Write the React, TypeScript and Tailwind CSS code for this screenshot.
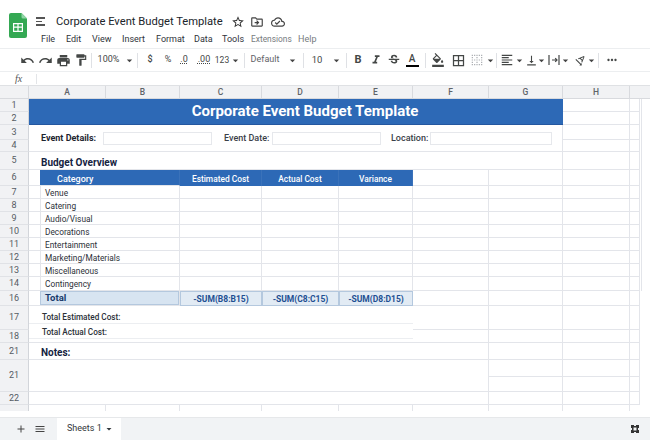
import {
  MdUndo,
  MdRedo,
  MdPrint,
  MdFormatPaint,
  MdFormatItalic,
  MdStrikethroughS,
  MdFormatColorFill,
  MdBorderAll,
  MdBorderClear,
  MdFormatAlignLeft,
  MdVerticalAlignBottom,
  MdTextRotationAngledown,
  MdMoreHoriz,
  MdStarBorder,
  MdOutlineDriveFileMove,
  MdOutlineCloudDone,
  MdAdd,
  MdMenu,
  MdArrowDropDown,
} from "react-icons/md";

const font = "font-['Roboto',sans-serif]";
const line = "border-r border-b border-[#e3e5ea]";
const rowHead =
  "flex items-center justify-center bg-[#f1f2f4] border-r border-b border-r-[#d2d5da] border-b-[#e0e2e6] pt-px text-[9px] text-[#555b63]";
const colHead =
  "flex items-center justify-center bg-[#f1f2f4] border-r border-b border-r-[#d8dade] border-b-[#d8dade] text-[8.500px] font-medium text-[#5f6368]";

const menu = [
  { label: "File", w: "w-[25px]" },
  { label: "Edit", w: "w-[26px]" },
  { label: "View", w: "w-[30px]" },
  { label: "Insert", w: "w-[34px]" },
  { label: "Format", w: "w-[38px]" },
  { label: "Data", w: "w-[28px]" },
  { label: "Tools", w: "w-[29px]" },
  { label: "Extensions", w: "w-[47px] text-[8.400px]", muted: true },
  { label: "Help", w: "w-[24px]", muted: true },
];

const items = ["Venue", "Catering", "Audio/Visual", "Decorations", "Entertainment", "Marketing/Materials", "Miscellaneous", "Contingency"];
const itemRows = [7, 8, 9, 10, 11, 12, 13, 14];

function Sep() {
  return <div className="mx-[2px] h-[15px] w-px shrink-0 bg-[#dfe1e5]" />;
}

function Caret({ className = "w-[10px]" }: { className?: string }) {
  return (
    <div className={`flex shrink-0 justify-center ${className}`}>
      <MdArrowDropDown className="shrink-0 text-[13px] text-[#444]" />
    </div>
  );
}

function Tool({ w, children }: { w: string; children: React.ReactNode }) {
  return <div className={`flex shrink-0 items-center justify-center text-[#444746] ${w}`}>{children}</div>;
}

// H and I columns, the same on almost every row
function Tail({ upper = false }: { upper?: boolean }) {
  return (
    <>
      <div className={line} />
      <div className={line} />
      <div className={upper ? "ml-px border-l border-[#e3e5ea]" : ""} />
    </>
  );
}

function Toolbar() {
  return (
    <div className="flex h-[24px] items-center border-y border-[#eceef0] pl-[18px] text-[#444746]">
      <Tool w="w-[18px]"><MdUndo className="text-[15px]" /></Tool>
      <Tool w="w-[18px]"><MdRedo className="text-[15px]" /></Tool>
      <Tool w="w-[18px]"><MdPrint className="text-[15px]" /></Tool>
      <Tool w="w-[17px]"><MdFormatPaint className="text-[14px]" /></Tool>
      <Sep />
      <Tool w="w-[29px]"><span className="text-[9px]">100%</span></Tool>
      <Caret className="w-[12px]" />
      <Sep />
      <Tool w="w-[20px]"><span className="text-[9px] font-medium">$</span></Tool>
      <Tool w="w-[16px]"><span className="text-[9px]">%</span></Tool>
      <Tool w="w-[16px]"><span className="text-[9px] underline decoration-dotted">.0</span></Tool>
      <Tool w="w-[24px]"><span className="text-[9px] underline decoration-dotted">.00</span></Tool>
      <Tool w="w-[12px]"><span className="text-[8.500px]">123</span></Tool>
      <Caret className="w-[14px]" />
      <Sep />
      <Tool w="w-[36px]"><span className="text-[9px] text-[#5f6368]">Default</span></Tool>
      <Caret className="w-[18px]" />
      <Sep />
      <Tool w="w-[22px]"><span className="text-[9.500px]">10</span></Tool>
      <Caret className="w-[16px]" />
      <Sep />
      <Tool w="w-[18px]"><span className="text-[11px] font-bold">B</span></Tool>
      <Tool w="w-[18px]"><MdFormatItalic className="text-[14px]" /></Tool>
      <Tool w="w-[18px]"><MdStrikethroughS className="text-[14px]" /></Tool>
      <Tool w="mr-[2px] w-[18px]">
        <div className="flex flex-col items-center">
          <span className="text-[10px] font-medium leading-[10px]">A</span>
          <div className="mt-px h-[2px] w-[13px] bg-black" />
        </div>
      </Tool>
      <Sep />
      <Tool w="w-[20px]"><MdFormatColorFill className="text-[14px]" /></Tool>
      <Tool w="w-[20px]"><MdBorderAll className="text-[15px]" /></Tool>
      <Tool w="w-[18px]"><MdBorderClear className="text-[14px] text-[#a8abaf]" /></Tool>
      <Caret className="w-[8px]" />
      <Sep />
      <Tool w="w-[16px]"><MdFormatAlignLeft className="text-[14px]" /></Tool>
      <Caret className="w-[8px]" />
      <Tool w="w-[16px]"><MdVerticalAlignBottom className="text-[13px]" /></Tool>
      <Caret className="w-[4px]" />
      <Tool w="ml-[4px] w-[14px]">
        <svg width="12" height="10" viewBox="0 0 12 10" fill="none" stroke="currentColor" strokeWidth="1.2">
          <path d="M1 0v10M11 0v10M4 5h5M7.2 3.2 9 5 7.2 6.800" />
        </svg>
      </Tool>
      <Caret className="w-[8px]" />
      <Tool w="ml-[4px] w-[14px]"><MdTextRotationAngledown className="text-[13px]" /></Tool>
      <Caret className="w-[9px]" />
      <Sep />
      <Tool w="w-[22px]"><MdMoreHoriz className="text-[14px]" /></Tool>
    </div>
  );
}

export default function App() {
  return (
    <div className={`flex h-[446px] w-[650px] flex-col overflow-hidden bg-white ${font}`}>
      {/* title + menus */}
      <div className="flex h-[48px] shrink-0">
        <svg className="ml-[9px] mt-[13px]" width="18" height="25" viewBox="0 0 18 25">
          <path d="M2 0h10.500L18 5.500V23a2 2 0 0 1-2 2H2a2 2 0 0 1-2-2V2a2 2 0 0 1 2-2z" fill="#34a853" />
          <path d="M12.500 0 18 5.500h-4a1.500 1.500 0 0 1-1.500-1.500z" fill="#8fd4a5" />
          <path d="M4 10h10v9H4z M5.200 11.200v2.400h3.200v-2.400z M9.600 11.200v2.400h3.200v-2.400z M5.200 14.800v3h3.200v-3z M9.600 14.800v3h3.200v-3z" fill="#fff" fillRule="evenodd" />
        </svg>
        <div className="ml-[9px] mt-[17px] flex flex-col gap-[2px]">
          <div className="h-[1.500px] w-[9px] bg-[#555]" />
          <div className="h-[1.500px] w-[6px] bg-[#555]" />
          <div className="h-[1.500px] w-[9px] bg-[#555]" />
        </div>
        <div className="ml-[-4px] flex-1">
          <div className="ml-[15px] mt-[14px] flex h-[16px] items-center">
            <span className="w-[175px] whitespace-nowrap text-[11.200px] text-[#20242a]">Corporate Event Budget Template</span>
            <MdStarBorder className="text-[14px] text-[#333]" />
            <MdOutlineDriveFileMove className="ml-[5px] text-[14px] text-[#444]" />
            <MdOutlineCloudDone className="ml-[7px] text-[14px] text-[#444]" />
          </div>
          <div className="mt-[1px] flex h-[17px] items-center text-[9px] text-[#30343a]">
            {menu.map((m) => (
              <span key={m.label} className={`${m.w} ${m.muted ? "text-[#777b80]" : ""}`}>
                {m.label}
              </span>
            ))}
          </div>
        </div>
      </div>

      <Toolbar />

      {/* formula bar */}
      <div className="flex h-[14px] shrink-0 items-center border-b border-[#dfe1e4]">
        <span className="ml-[15px] w-[21px] font-['Liberation_Serif',serif] text-[10px] italic text-[#555]">fx</span>
        <div className="h-[10px] w-px bg-[#e3e5e8]" />
      </div>

      {/* sheet */}
      <div className="grid h-[325px] shrink-0 grid-cols-[29px_77px_74px_82px_77px_74px_76px_74px_67px_10px_10px] grid-rows-[13px_13px_13px_15px_12px_18px_16px_13px_13px_13px_13px_13px_13px_13px_14px_15px_24px_13px_17px_17px_15px_13px_6px] text-[#1f2937]">
        {/* column letters */}
        <div className={colHead} />
        {["A", "B", "C", "D", "E", "F", "G", "H"].map((c) => (
          <div key={c} className={colHead}>{c}</div>
        ))}
        <div className="col-span-2 border-b border-[#d8dade] bg-[#f1f2f4]" />

        {/* rows 1-2 banner */}
        <div className={rowHead}>1</div>
        <div className="col-span-7 row-span-2 flex items-center justify-center border-b border-[#2457a0] bg-[#2d69b6] pl-[18px] text-[15px] font-bold text-white">
          Corporate Event Budget Template
        </div>
        <Tail upper />
        <div className={rowHead}>2</div>
        <Tail upper />

        {/* rows 3-4 event details */}
        <div className={rowHead}>3</div>
        <div className={`col-span-7 row-span-2 flex items-start pl-[12px] pt-[7px] ${line}`}>
          <span className="w-[62px] text-[9px] font-bold leading-[12px] text-[#1d2430]">Event Details:</span>
          <div className="h-[13px] w-[109px] border border-[#e6e8ec]" />
          <span className="ml-[12px] w-[48px] text-[9px] font-medium leading-[12px] text-[#3a4048]">Event Date:</span>
          <div className="h-[13px] w-[109px] border border-[#e6e8ec]" />
          <span className="ml-[10px] w-[39px] text-[9px] font-medium leading-[12px] text-[#3a4048]">Location:</span>
          <div className="h-[13px] w-[122px] border border-[#e6e8ec]" />
        </div>
        <Tail upper />
        <div className={rowHead}>4</div>
        <Tail upper />

        {/* row 5 */}
        <div className={rowHead}>5</div>
        <div className={`col-span-7 flex items-center pl-[12px] pt-[3px] text-[10px] font-bold text-[#15233f] ${line}`}>Budget Overview</div>
        <Tail upper />

        {/* row 6 table head */}
        <div className={rowHead}>6</div>
        <div className="col-span-2 border-r border-b border-r-[#3a72ba] border-b-[#e3e5ea] pl-[11px]">
          <div className="flex h-full items-center bg-[#2d69b6] pl-[17px] pt-[4px] text-[9px] font-medium text-white">Category</div>
        </div>
        {["Estimated Cost", "Actual Cost", "Variance"].map((h) => (
          <div key={h} className="flex items-center justify-center border-r border-[#3a72ba] bg-[#2d69b6] pt-[3px] text-[8.400px] font-medium text-white">
            {h}
          </div>
        ))}
        <div className={line} />
        <div className={line} />
        <Tail upper />

        {/* rows 7-14 */}
        {items.map((item, i) => (
          <div key={item} className="contents">
            <div className={rowHead}>{itemRows[i]}</div>
            <div className={`col-span-2 pl-[11px] ${line}`}>
              <div className="flex h-full items-center border-l border-[#e3e5ea] pl-[4px] pt-[2px] text-[8.300px] text-[#2b3038]">{item}</div>
            </div>
            <div className={line} />
            <div className={line} />
            <div className={line} />
            <div className={line} />
            <div className={line} />
            <Tail upper />
          </div>
        ))}

        {/* row 16 total */}
        <div className={rowHead}>16</div>
        <div className={`col-span-2 pl-[11px] ${line}`}>
          <div className="flex h-full items-center border border-[#b4c8de] bg-[#d7e4f1] pl-[4px] pt-px text-[9.500px] font-bold text-[#173a6b]">Total</div>
        </div>
        {["-SUM(B8:B15)", "-SUM(C8:C15)", "-SUM(D8:D15)"].map((f) => (
          <div key={f} className="flex items-center justify-center border border-[#b4c8de] bg-[#e2ebf4] pt-px text-[8.500px] font-bold text-[#1d4f92]">
            {f}
          </div>
        ))}
        <div className={line} />
        <div className={line} />
        <Tail />

        {/* rows 17-18 */}
        <div className={`${rowHead} pt-[5px]`}>17</div>
        <div className="col-span-5 row-span-2 flex flex-col text-[8.200px] font-medium text-[#2b3038]">
          <div className="flex h-[18px] items-end border-b border-[#eceef1] pl-[13px]">Total Estimated Cost:</div>
          <div className="flex h-[15px] items-center border-b border-[#eceef1] pl-[13px] pt-[2px]">Total Actual Cost:</div>
          <div className="flex-1 border-b border-[#e3e5ea]" />
        </div>
        <div className={line} />
        <div className={line} />
        <Tail />
        <div className={rowHead}>18</div>
        <div className={line} />
        <div className={line} />
        <Tail />

        {/* notes */}
        <div className={rowHead}>21</div>
        <div className={`col-span-6 flex items-center pl-[12px] pt-[3px] text-[10px] font-bold text-[#15233f] ${line}`}>Notes:</div>
        <div className={line} />
        <Tail />

        <div className={`${rowHead} row-span-2 pt-[5px]`}>21</div>
        <div className={`col-span-6 row-span-2 ${line}`} />
        <div className={line} />
        <Tail />
        <div className={line} />
        <Tail />

        <div className={`${rowHead} pt-[2px]`}>22</div>
        <div className={`col-span-6 ${line}`} />
        <div className={line} />
        <Tail />

        {/* cut-off last row */}
        <div className="border-r border-[#d2d5da] bg-[#f1f2f4]" />
        {["a", "b", "c", "d", "e", "f", "g", "h", "i"].map((k) => (
          <div key={k} className={k === "i" ? "" : "border-r border-[#e3e5ea]"} />
        ))}
      </div>

      {/* sheet tabs */}
      <div className="mt-[6px] flex h-[23px] shrink-0 items-center border-t border-[#e6e8ea] bg-[#f1f3f5] text-[#444]">
        <MdAdd className="ml-[15px] text-[12px]" />
        <MdMenu className="ml-[7px] text-[12px]" />
        <div className="ml-[11px] flex h-full w-[64px] items-center bg-white pl-[10px] text-[9px] text-[#33373c]">
          <span className="w-[36px]">Sheets 1</span>
          <MdArrowDropDown className="text-[12px]" />
        </div>
        <svg className="ml-auto mr-[11px]" width="8" height="8" viewBox="0 0 8 8">
          <path fillRule="evenodd" d="M0 0h3v1h2V0h3v3H7v2h1v3H5V7H3v1H0V5h1V3H0z M2.500 2.500v3h3v-3z" fill="#333" />
        </svg>
      </div>
    </div>
  );
}
